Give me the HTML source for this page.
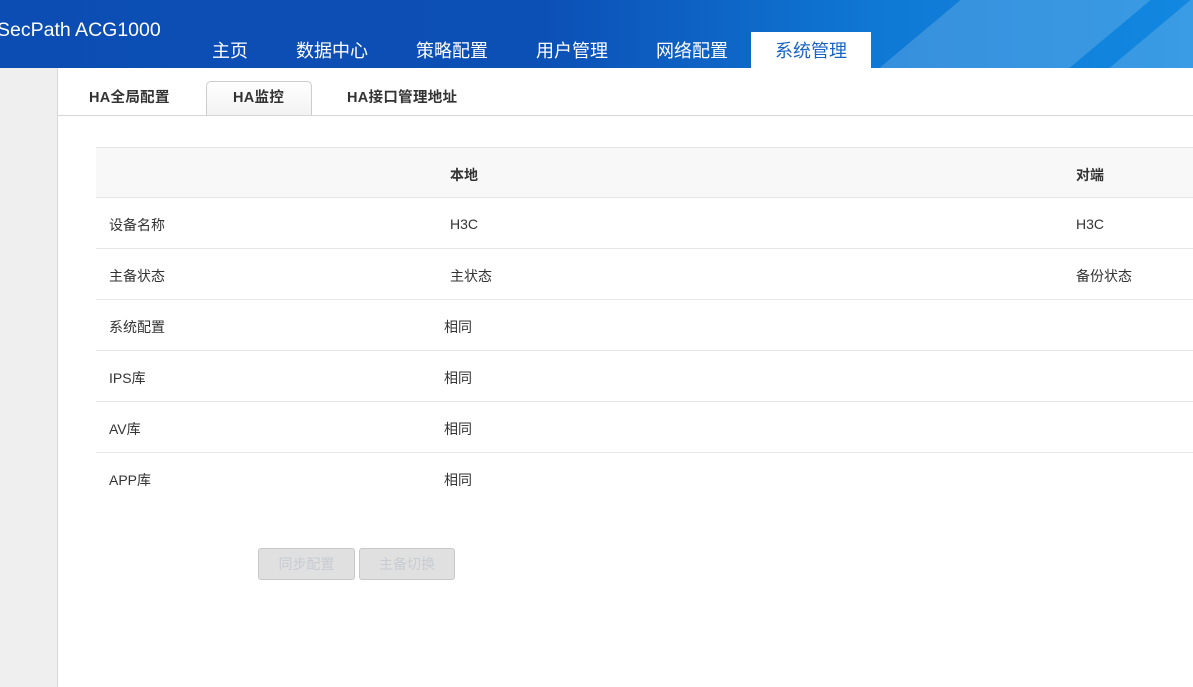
<!DOCTYPE html>
<html><head><meta charset="utf-8"><style>
*{margin:0;padding:0;box-sizing:border-box}
body{width:1193px;height:687px;overflow:hidden;background:#fff;font-family:"Liberation Sans","Noto Sans CJK SC",sans-serif;position:relative}
.hdr{position:absolute;left:0;top:0;width:1193px;height:68px;background:linear-gradient(90deg,#0b4db3 0%,#0c4fb5 45%,#0f7ad6 75%,#1288e0 100%);overflow:hidden}
.stripe{position:absolute;top:0;height:68px;background:rgba(255,255,255,.17);transform:skewX(-50deg)}
.logo{position:absolute;left:-3px;top:19px;color:#fff;font-size:19.5px}
.nav{position:absolute;top:32px;height:36px;color:#fff;font-size:18px;line-height:38px}
.nav.act{background:#fff;color:#1a63c6;width:120px;text-align:center;left:751px}
.side{position:absolute;left:0;top:68px;width:58px;height:619px;background:#efefef;border-right:1px solid #d8d8d8}
.tabline{position:absolute;left:58px;top:115px;right:0;border-top:1px solid #d6d6d6}
.tab{position:absolute;font-size:14.5px;font-weight:bold;color:#333;line-height:1;letter-spacing:.3px}
.tabsel{position:absolute;left:206px;top:81px;width:106px;height:35px;border:1px solid #ccc;border-bottom:none;border-radius:5px 5px 0 0;background:linear-gradient(#fff,#f2f2f2)}
.row{position:absolute;left:96px;right:0;height:51px;border-bottom:1px solid #e6e6e6;font-size:14px;color:#333}
.row span{position:absolute;top:17px}
.btn{position:absolute;top:548px;height:32px;border:1px solid #c8c8c8;border-radius:3px;background:#e0e0e0;color:#c6ccd2;font-size:14px;text-align:center;line-height:30px}
</style></head><body>
<div class="hdr">
<div class="stripe" style="left:920px;width:190px"></div>
<div class="stripe" style="left:1150px;width:120px"></div>
<div class="logo">SecPath ACG1000</div>
<div class="nav" style="left:212px">主页</div>
<div class="nav" style="left:296px">数据中心</div>
<div class="nav" style="left:416px">策略配置</div>
<div class="nav" style="left:536px">用户管理</div>
<div class="nav" style="left:656px">网络配置</div>
<div class="nav act">系统管理</div>
</div>
<div class="side"></div>
<div class="tabsel"></div>
<div class="tabline"></div>
<div class="tab" style="left:89px;top:91px">HA全局配置</div>
<div class="tab" style="left:233px;top:91px">HA监控</div>
<div class="tab" style="left:347px;top:91px">HA接口管理地址</div>
<div class="row" style="top:147px;background:#f8f8f8;border-top:1px solid #e6e6e6;font-weight:bold"><span style="left:354px">本地</span><span style="left:980px">对端</span></div>
<div class="row" style="top:198px"><span style="left:13px">设备名称</span><span style="left:354px;top:18px">H3C</span><span style="left:980px;top:18px">H3C</span></div>
<div class="row" style="top:249px"><span style="left:13px">主备状态</span><span style="left:354px">主状态</span><span style="left:980px">备份状态</span></div>
<div class="row" style="top:300px"><span style="left:13px">系统配置</span><span style="left:348px">相同</span></div>
<div class="row" style="top:351px"><span style="left:13px">IPS库</span><span style="left:348px">相同</span></div>
<div class="row" style="top:402px"><span style="left:13px">AV库</span><span style="left:348px">相同</span></div>
<div class="row" style="top:453px;border-bottom:none"><span style="left:13px">APP库</span><span style="left:348px">相同</span></div>
<div class="btn" style="left:258px;width:97px">同步配置</div>
<div class="btn" style="left:359px;width:96px">主备切换</div>
</body></html>
